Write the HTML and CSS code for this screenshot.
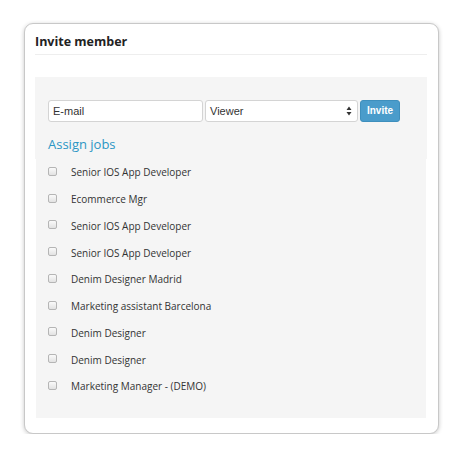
FILE: index.html
```html
<!DOCTYPE html>
<html>
<head>
<meta charset="utf-8">
<link rel="stylesheet" href="styles.css">
</head>
<body>
<div class="card">
  <h2 class="title">Invite member</h2>
  <div class="panel">
    <div class="form">
      <div class="row-inputs">
        <div class="field email">E-mail</div>
        <div class="field select">Viewer
          <svg class="arrows" width="6" height="10" viewBox="0 0 6 10"><path d="M0.5 4 L3 0.5 L5.5 4 Z M0.5 6 L3 9.5 L5.5 6 Z" fill="#333"/></svg>
        </div>
        <div class="btn">Invite</div>
      </div>
      <div class="assign">Assign jobs</div>
    </div>
    <ul class="jobs">
      <li><span class="cb"></span>Senior IOS App Developer</li>
      <li><span class="cb"></span>Ecommerce Mgr</li>
      <li><span class="cb"></span>Senior IOS App Developer</li>
      <li><span class="cb"></span>Senior IOS App Developer</li>
      <li><span class="cb"></span>Denim Designer Madrid</li>
      <li><span class="cb"></span>Marketing assistant Barcelona</li>
      <li><span class="cb"></span>Denim Designer</li>
      <li><span class="cb"></span>Denim Designer</li>
      <li><span class="cb"></span>Marketing Manager - (DEMO)</li>
    </ul>
  </div>
</div>
</body>
</html>
```
FILE: styles.css
```css
html, body { margin: 0; padding: 0; background: #fff; }
body { font-family: "Open Sans", "Liberation Sans", sans-serif; }
.card {
  box-sizing: border-box;
  margin: 23px 0 0 24px;
  width: 415px;
  height: 411px;
  border: 1px solid #c8c8c8;
  border-radius: 9px;
  box-shadow: 0 1px 4px rgba(0,0,0,0.22);
  padding: 7px 11px 0 10px;
  background: #fff;
}
.title {
  margin: 0;
  font-size: 12.5px;
  font-weight: 700;
  line-height: 22px;
  color: #222;
  padding-bottom: 1px;
  border-bottom: 1px solid #eee;
}
.panel { margin-top: 22px; }
.form {
  background: #f5f5f5;
  padding: 23px 13px 4px 13px;
}
.row-inputs { display: flex; gap: 2px; height: 22px; }
.field {
  box-sizing: border-box;
  height: 22px;
  background: #fff;
  border: 1px solid #d4d4d4;
  border-radius: 3px;
  font-family: "Liberation Sans", Arial, sans-serif;
  font-size: 11px;
  color: #333;
  line-height: 20px;
  padding-left: 4px;
}
.email { width: 155px; }
.select { width: 153px; position: relative; }
.arrows { position: absolute; right: 5px; top: 5px; }
.btn {
  box-sizing: border-box;
  width: 40px;
  height: 22px;
  background: #4a9ccb;
  border: 1px solid #3e8fbd;
  border-radius: 3px;
  color: #fff;
  font-family: "Liberation Sans", Arial, sans-serif;
  font-weight: 700;
  font-size: 10px;
  text-align: center;
  line-height: 20px;
}
.assign {
  margin-top: 11px;
  font-size: 13px;
  line-height: 22px;
  color: #2b96c4;
}
.jobs {
  list-style: none;
  margin: 0 1px;
  padding: 0 0 18px 12px;
  background: #f5f5f5;
}
.jobs li {
  height: 26.75px;
  display: flex;
  align-items: center;
  font-size: 10px;
  color: #333;
}
.cb {
  box-sizing: border-box;
  width: 9px;
  height: 9px;
  border: 1px solid #b5b5b5;
  border-radius: 2px;
  background: linear-gradient(#fafafa, #e2e2e2);
  margin-right: 14px;
  margin-top: -2px;
}
```
